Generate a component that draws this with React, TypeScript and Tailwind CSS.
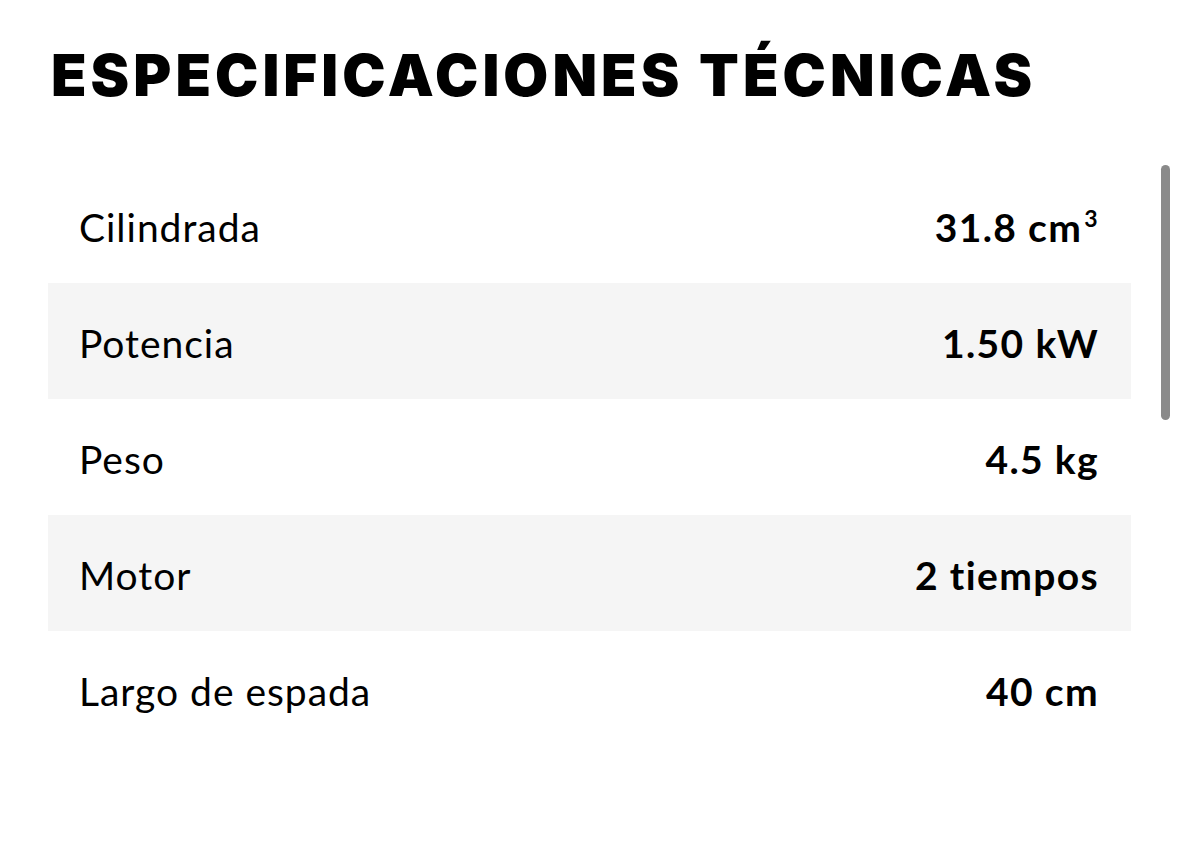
import React from "react";

const rows: { label: string; value: React.ReactNode }[] = [
  {
    label: "Cilindrada",
    value: (
      <>
        31.8 cm
        <span className="relative -top-[15px] ml-[2px] text-[23px] leading-none">3</span>
      </>
    ),
  },
  { label: "Potencia", value: "1.50 kW" },
  { label: "Peso", value: "4.5 kg" },
  { label: "Motor", value: "2 tiempos" },
  { label: "Largo de espada", value: "40 cm" },
];

export default function App() {
  return (
    <div className="relative w-[1179px] h-[863px] bg-white overflow-hidden">
      <div className="pl-[48px] w-[1131px]">
        <h1
          className="pt-[39px] pl-[3px] h-[167px] text-[58px] leading-[72px] font-black text-black tracking-[0.07em] whitespace-nowrap"
          style={{ fontFamily: "Inter, 'Liberation Sans', sans-serif" }}
        >
          ESPECIFICACIONES TÉCNICAS
        </h1>
        <div className="flex flex-col">
          {rows.map((r, i) => (
            <div
              key={r.label}
              className={`flex h-[116px] items-center justify-between pl-[31px] pr-[32px] ${
                i % 2 === 1 ? "bg-[#f5f5f5]" : "bg-white"
              }`}
            >
              <span
                className="pt-[4px] text-[39px] text-black tracking-[0.025em]"
                style={{ fontFamily: "Lato, 'Noto Sans', sans-serif" }}
              >
                {r.label}
              </span>
              <span
                className="pt-[4px] text-[39px] font-bold text-black tracking-[0.035em]"
                style={{ fontFamily: "Lato, 'Noto Sans', sans-serif" }}
              >
                {r.value}
              </span>
            </div>
          ))}
        </div>
      </div>
      <div className="absolute left-[1161px] top-[165px] w-[9px] h-[255px] rounded-full bg-[#8a8a8a]" />
    </div>
  );
}
